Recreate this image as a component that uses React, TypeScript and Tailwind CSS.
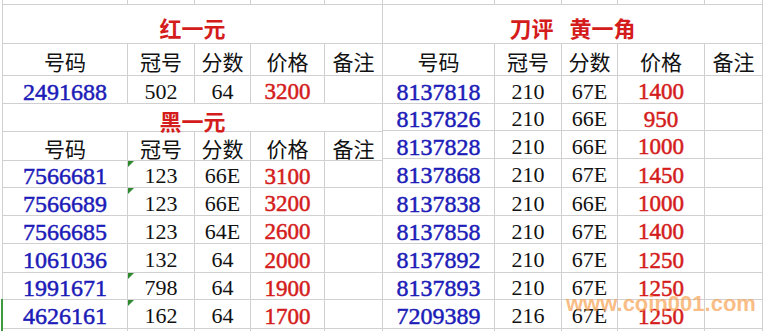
import React from "react"

type Row = { no: string; crown: string; score: string; price: string; mark?: boolean; h: string }

const leftCols = ["w-[125px]", "w-[67px]", "w-[56px]", "w-[74px]", "w-[58px]"]
const rightCols = ["w-[112px]", "w-[67px]", "w-[56px]", "w-[87px]", "w-[58px]"]

const heads = ["号码", "冠号", "分数", "价格", "备注"]

const redTop: Row[] = [{ no: "2491688", crown: "502", score: "64", price: "3200", h: "h-[28px]" }]

const black: Row[] = [
    { no: "7566681", crown: "123", score: "66E", price: "3100", mark: true, h: "h-[27px]" },
    { no: "7566689", crown: "123", score: "66E", price: "3200", mark: true, h: "h-[28px]" },
    { no: "7566685", crown: "123", score: "64E", price: "2600", h: "h-[28px]" },
    { no: "1061036", crown: "132", score: "64", price: "2000", h: "h-[29px]" },
    { no: "1991671", crown: "798", score: "64", price: "1900", mark: true, h: "h-[27px]" },
    { no: "4626161", crown: "162", score: "64", price: "1700", mark: true, h: "h-[29px]" },
]

const yellow: Row[] = [
    { no: "8137818", crown: "210", score: "67E", price: "1400", h: "h-[28px]" },
    { no: "8137826", crown: "210", score: "66E", price: "950", h: "h-[27px]" },
    { no: "8137828", crown: "210", score: "66E", price: "1000", h: "h-[28px]" },
    { no: "8137868", crown: "210", score: "67E", price: "1450", h: "h-[29px]" },
    { no: "8137838", crown: "210", score: "66E", price: "1000", h: "h-[28px]" },
    { no: "8137858", crown: "210", score: "67E", price: "1400", h: "h-[28px]" },
    { no: "8137892", crown: "210", score: "67E", price: "1250", h: "h-[29px]" },
    { no: "8137893", crown: "210", score: "67E", price: "1250", h: "h-[27px]" },
    { no: "7209389", crown: "216", score: "67E", price: "1250", h: "h-[29px]" },
]

const Cell = ({ w, children, mark }: { w: string; children?: React.ReactNode; mark?: boolean }) => (
    <div className={`${w} relative shrink-0 h-full border-r border-[#d0d0d0] flex items-center justify-center pt-[4px] leading-none`}>
        {mark && (
            <span className="absolute top-0 left-0 w-0 h-0 border-t-[6px] border-t-[#2f8a2f] border-r-[6px] border-r-transparent" />
        )}
        {children}
    </div>
)

const StripRow = ({ cols }: { cols: string[] }) => (
    <div className="flex h-[5px] border-b border-[#d0d0d0]">
        {cols.map((w, i) => <Cell key={i} w={w} />)}
    </div>
)

const HeadRow = ({ cols, h }: { cols: string[]; h: string }) => (
    <div className={`flex ${h} border-b border-[#d0d0d0]`}>
        {cols.map((w, i) => (
            <Cell key={i} w={w}>
                <span className="text-[21px] text-[#111] font-['Noto_Sans_CJK_SC',sans-serif]">{heads[i]}</span>
            </Cell>
        ))}
    </div>
)

const TitleRow = ({ h, children }: { h: string; children: React.ReactNode }) => (
    <div className={`flex ${h} border-b border-r border-[#d0d0d0] items-center justify-center pt-[5px] leading-none`}>
        <div className="flex gap-[16px] text-[22px] font-bold text-[#d41c1c] font-['Noto_Sans_CJK_SC',sans-serif]">
            {children}
        </div>
    </div>
)

const DataRow = ({ cols, row }: { cols: string[]; row: Row }) => (
    <div className={`flex ${row.h} border-b border-[#d0d0d0] font-['Liberation_Serif',serif]`}>
        <Cell w={cols[0]}>
            <span className="text-[24px] text-[#1c1cb8] [-webkit-text-stroke:0.5px_#1c1cb8]">{row.no}</span>
        </Cell>
        <Cell w={cols[1]} mark={row.mark}><span className="text-[22px] text-[#111]">{row.crown}</span></Cell>
        <Cell w={cols[2]}><span className="text-[22px] text-[#111]">{row.score}</span></Cell>
        <Cell w={cols[3]}>
            <span className="text-[23px] text-[#d41c1c] [-webkit-text-stroke:0.5px_#d41c1c]">{row.price}</span>
        </Cell>
        <Cell w={cols[4]} />
    </div>
)

export default function App() {
    return (
        <div className="relative w-[766px] h-[331px] overflow-hidden bg-white flex pl-[2px]">
            <div className="w-[381px] shrink-0 border-l border-[#d0d0d0]">
                <StripRow cols={leftCols} />
                <TitleRow h="h-[39px]"><span>红一元</span></TitleRow>
                <HeadRow cols={leftCols} h="h-[32px]" />
                {redTop.map(r => <DataRow key={r.no} cols={leftCols} row={r} />)}
                <TitleRow h="h-[28px]"><span>黑一元</span></TitleRow>
                <HeadRow cols={leftCols} h="h-[29px]" />
                {black.map(r => <DataRow key={r.no} cols={leftCols} row={r} />)}
                <div className="flex h-[3px]">
                    {leftCols.map((w, i) => <Cell key={i} w={w} />)}
                </div>
            </div>
            <div className="w-[380px] shrink-0">
                <StripRow cols={rightCols} />
                <TitleRow h="h-[39px]"><span>刀评</span><span>黄一角</span></TitleRow>
                <HeadRow cols={rightCols} h="h-[32px]" />
                {yellow.map(r => <DataRow key={r.no} cols={rightCols} row={r} />)}
                <div className="flex h-[3px]">
                    {rightCols.map((w, i) => <Cell key={i} w={w} />)}
                </div>
            </div>

            {/* selected cell edge */}
            <div className="absolute left-[1px] top-[299px] w-[2px] h-[32px] bg-[#3f9a3f]" />

            {/* watermark */}
            <div className="absolute left-[566px] top-[293px] leading-none text-[22px] font-bold text-[rgba(247,160,80,0.7)] font-['Liberation_Sans',sans-serif]">
                www.coin001.com
            </div>
        </div>
    )
}
